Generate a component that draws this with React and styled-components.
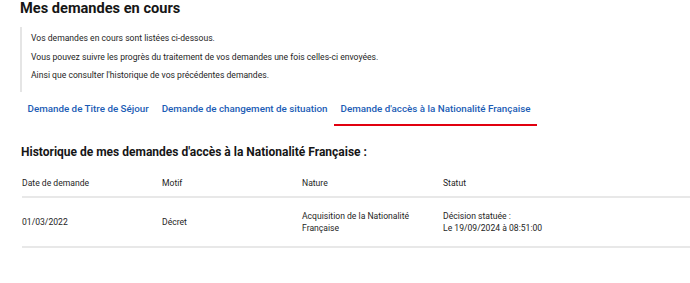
import React from 'react';
import styled, { createGlobalStyle } from 'styled-components';

const GlobalStyle = createGlobalStyle`
  body {
    margin: 0;
    background: #fff;
    font-family: Roboto, "Liberation Sans", Arial, sans-serif;
    color: #1e1e1e;
  }
`;

const Page = styled.div`
  padding: 0 0 0 20px;
  width: 670px;
  overflow: hidden;
`;

const Title = styled.h1`
  margin: 0;
  font-size: 14.6px;
  line-height: 17px;
  font-weight: 700;
  color: #161616;
`;

const Intro = styled.div`
  margin-top: 10px;
  border-left: 2px solid #e5e5e5;
  padding: 2px 0 7px 9px;
  display: flex;
  flex-direction: column;
`;

const IntroLine = styled.p`
  margin: 0;
  font-size: 8.6px;
  line-height: 18.5px;
  color: #1e1e1e;
`;

const Tabs = styled.nav`
  display: flex;
  margin-top: 4px;
  margin-left: 1px;
`;

const Tab = styled.a`
  display: block;
  padding: 7px 6.5px 10px;
  font-size: 9.8px;
  font-weight: 500;
  color: #1b5cb5;
  text-decoration: none;
  border-bottom: 2px solid ${(p) => (p.$active ? '#e1000f' : 'transparent')};
  white-space: nowrap;
`;

const Section = styled.h2`
  margin: 18px 0 0 1px;
  font-size: 12px;
  line-height: 16px;
  font-weight: 700;
  color: #161616;
`;

const Table = styled.div`
  margin-top: 11px;
  margin-left: 2px;
`;

const Row = styled.div`
  display: grid;
  grid-template-columns: 140px 140px 141px 1fr;
  align-items: center;
  border-bottom: 2px solid #e8e8e8;
  height: ${(p) => p.$h}px;
`;

const Cell = styled.div`
  font-size: 8.6px;
  line-height: 12px;
  color: #1e1e1e;
`;

export default function App() {
  return (
    <>
      <GlobalStyle />
      <Page>
        <Title>Mes demandes en cours</Title>
        <Intro>
          <IntroLine>Vos demandes en cours sont listées ci-dessous.</IntroLine>
          <IntroLine>Vous pouvez suivre les progrès du traitement de vos demandes une fois celles-ci envoyées.</IntroLine>
          <IntroLine>Ainsi que consulter l'historique de vos précédentes demandes.</IntroLine>
        </Intro>
        <Tabs>
          <Tab>Demande de Titre de Séjour</Tab>
          <Tab>Demande de changement de situation</Tab>
          <Tab $active>Demande d'accès à la Nationalité Française</Tab>
        </Tabs>
        <Section>Historique de mes demandes d'accès à la Nationalité Française :</Section>
        <Table>
          <Row $h={25}>
            <Cell>Date de demande</Cell>
            <Cell>Motif</Cell>
            <Cell>Nature</Cell>
            <Cell>Statut</Cell>
          </Row>
          <Row $h={48}>
            <Cell>01/03/2022</Cell>
            <Cell>Décret</Cell>
            <Cell>Acquisition de la Nationalité<br />Française</Cell>
            <Cell>Décision statuée :<br />Le 19/09/2024 à 08:51:00</Cell>
          </Row>
        </Table>
      </Page>
    </>
  );
}
